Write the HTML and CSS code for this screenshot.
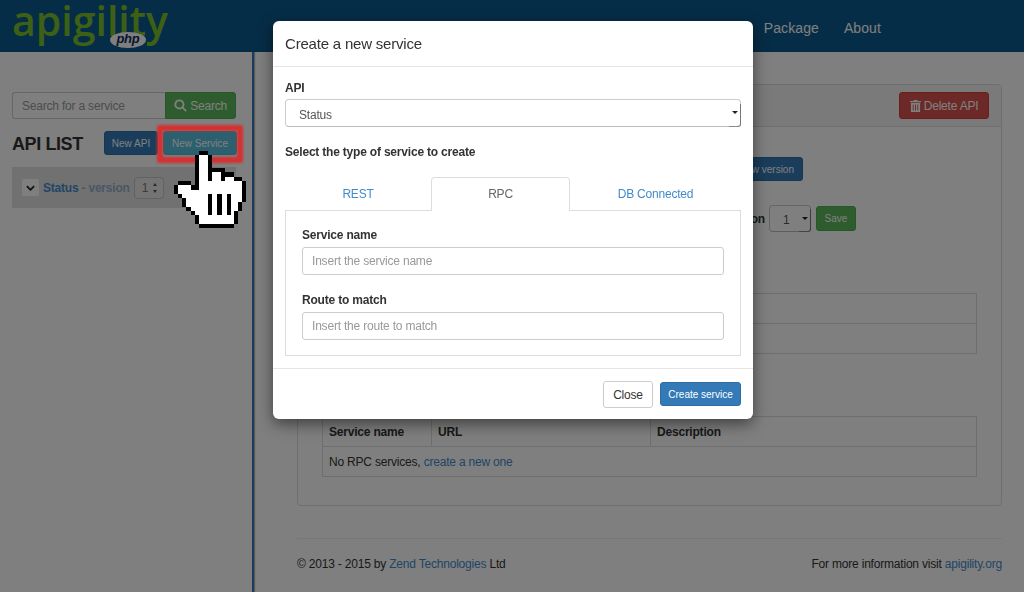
FILE: index.html
```html
<!DOCTYPE html>
<html lang="en">
<head>
    <meta charset="UTF-8">
    <meta name="viewport" content="width=device-width, initial-scale=1.0">
    <title>Apigility</title>
    <link rel="stylesheet" href="styles.css">
</head>
<body>

    <!-- Top bar -->
    <header class="topbar">
        <div class="logo">
            <span class="logo-word">apigility</span>
            <span class="logo-php">php</span>
        </div>
        <nav class="topnav">
            <a href="#">Package</a>
            <a href="#">About</a>
        </nav>
    </header>

    <div class="layout">
        <!-- API list -->
        <aside class="sidebar">
            <form class="search">
                <input class="search-input" type="text" placeholder="Search for a service">
                <button class="btn btn-green search-btn" type="button">
                    <svg class="search-icon" viewBox="0 0 12 12"><circle cx="5" cy="5" r="3.8"/><path d="M7.8 7.8 11.2 11.2"/></svg>
                    Search
                </button>
            </form>

            <div class="list-head">
                <h2>API LIST</h2>
                <div class="list-actions">
                    <button class="btn btn-blue btn-small" type="button">New API</button>
                    <button class="btn btn-cyan btn-small" type="button">New Service</button>
                </div>
            </div>

            <div class="api-row">
                <button class="chevron" type="button">
                    <svg viewBox="0 0 10 6"><path d="M1 1l4 4 4-4"/></svg>
                </button>
                <a class="api-name" href="#">Status</a>
                <span class="api-version">- version</span>
                <span class="spin">1<i class="spin-arrows"></i></span>
            </div>
        </aside>

        <!-- API detail behind the dialog -->
        <main class="content">
            <section class="panel">
                <div class="panel-head">
                    <button class="btn btn-red delete-btn" type="button">
                        <svg class="trash-icon" viewBox="0 0 12 14"><path d="M4 2V1h4v1h4v1.4H0V2zM1 4.4h10V14H1zM3 6v6.5h1V6zm2.5 0v6.5h1V6zM8 6v6.5h1V6z" fill-rule="evenodd"/></svg>
                        Delete API
                    </button>
                </div>
                <div class="panel-body">
                    <div class="version-row">
                        <button class="btn btn-blue btn-small" type="button">Create new version</button>
                    </div>
                    <div class="default-row">
                        <b>Set default version</b>
                        <span class="sel sel-small">1</span>
                        <button class="btn btn-green btn-small save-btn" type="button">Save</button>
                    </div>

                    <h4 class="section-title">REST services</h4>
                    <table class="services">
                        <tr><th>Service name</th><th>URL</th><th>Description</th></tr>
                        <tr><td colspan="3">No REST services, <a href="#">create a new one</a></td></tr>
                    </table>

                    <h4 class="section-title">RPC services</h4>
                    <table class="services">
                        <tr><th>Service name</th><th>URL</th><th>Description</th></tr>
                        <tr><td colspan="3">No RPC services, <a href="#">create a new one</a></td></tr>
                    </table>
                </div>
            </section>

            <footer class="footer">
                <span>&copy; 2013 - 2015 by <a href="#">Zend Technologies</a> Ltd</span>
                <span>For more information visit <a href="#">apigility.org</a></span>
            </footer>
        </main>
    </div>

    <div class="backdrop"></div>

    <!-- Dialog -->
    <div class="modal">
        <div class="modal-head">Create a new service</div>
        <div class="modal-body">
            <label class="field-label">API</label>
            <span class="sel sel-wide">Status</span>
            <p class="field-label type-label">Select the type of service to create</p>

            <div class="tabs">
                <a class="tab" href="#">REST</a>
                <a class="tab tab-active" href="#">RPC</a>
                <a class="tab" href="#">DB Connected</a>
            </div>
            <div class="tab-pane">
                <label class="field-label">Service name</label>
                <input class="text-input" type="text" placeholder="Insert the service name">
                <label class="field-label route-label">Route to match</label>
                <input class="text-input" type="text" placeholder="Insert the route to match">
            </div>
        </div>
        <div class="modal-foot">
            <button class="btn btn-white" type="button">Close</button>
            <button class="btn btn-primary" type="button">Create service</button>
        </div>
    </div>

    <!-- Tutorial highlight and pointer -->
    <div class="highlight"></div>
    <svg class="pointer" viewBox="0 0 17 18" shape-rendering="crispEdges">
        <path class="pointer-fill" d="M6 1.5h2M6 2.5h2M6 3.5h2M6 4.5h2M6 5.5h2M9 5.5h2M6 6.5h2M9 6.5h2M12 6.5h2M6 7.5h10M1 8.5h3M6 8.5h10M1 9.5h15M2 10.5h14M3 11.5h13M3 12.5h12M4 13.5h11M5 14.5h9M6 15.5h8M6 16.5h8"/>
        <path class="pointer-line" d="M6 .5h2M5 1.5h1M8 1.5h1M5 2.5h1M8 2.5h1M5 3.5h1M8 3.5h1M5 4.5h1M8 4.5h4M5 5.5h1M8 5.5h1M11 5.5h3M5 6.5h1M8 6.5h1M11 6.5h1M14 6.5h2M1 7.5h3M5 7.5h1M16 7.5h1M0 8.5h1M4 8.5h2M16 8.5h1M0 9.5h1M16 9.5h1M1 10.5h1M8 10.5h1M10.2 10.5h1M12.4 10.5h1M16 10.5h1M2 11.5h1M8 11.5h1M10.2 11.5h1M12.4 11.5h1M16 11.5h1M2 12.5h1M8 12.5h1M10.2 12.5h1M12.4 12.5h1M15 12.5h1M3 13.5h1M8 13.5h1M10.2 13.5h1M12.4 13.5h1M15 13.5h1M4 14.5h1M8 14.5h1M10.2 14.5h1M12.4 14.5h1M14 14.5h1M5 15.5h1M14 15.5h1M5 16.5h1M14 16.5h1M6 17.5h8"/>
    </svg>

</body>
</html>
```

FILE: styles.css
```css
* {
    box-sizing: border-box;
}

body {
    font-family: "Liberation Sans", Arial, sans-serif;
    font-size: 12px;
    letter-spacing: -0.2px;
    color: #333;
    background: #fff;
    margin: 0;
    height: 592px;
    overflow: hidden;
}

a {
    color: #428bca;
    text-decoration: none;
}

input,
button {
    letter-spacing: inherit;
}

/* Top bar */
.topbar {
    height: 52px;
    background: #0c5a8e;
    display: flex;
    align-items: center;
    justify-content: space-between;
    padding: 0 143px 0 12px;
}

.logo {
    position: relative;
    width: 146px;
    height: 52px;
}

.logo-word {
    font-family: "Open Sans", sans-serif;
    font-size: 41px;
    font-weight: 600;
    letter-spacing: 0;
    line-height: 52px;
    color: #7cc02b;
    display: block;
    margin-top: -6px;
}

.logo-php {
    position: absolute;
    left: 98px;
    top: 32px;
    width: 36px;
    height: 16px;
    border-radius: 50%;
    background: #fff;
    color: #0c2c5c;
    font-size: 13px;
    font-weight: bold;
    font-style: italic;
    line-height: 14px;
    text-align: center;
}

.topnav {
    display: flex;
    gap: 25px;
    padding-top: 4px;
}

.topnav a {
    font-size: 14px;
    letter-spacing: .1px;
    color: #fff;
}

/* Page columns */
.layout {
    display: flex;
    height: 540px;
}

.sidebar {
    width: 254px;
    padding: 40px 16px 0 12px;
    border-right: 2px solid #337ab7;
    box-shadow: 1px 0 1px rgba(0, 0, 0, .3);
    flex: none;
}

.content {
    flex: 1;
    padding: 32px 22px 0 43px;
}

/* Buttons */
.btn {
    font-family: inherit;
    font-size: 12px;
    border: 1px solid transparent;
    border-radius: 3px;
    color: #fff;
    padding: 0 8px;
}

.btn-small {
    font-size: 10px;
    letter-spacing: 0;
    height: 24px;
}

.btn-green {
    background: #5cb85c;
    border-color: #4cae4c;
}

.btn-blue {
    background: #337ab7;
    border-color: #2e6da4;
}

.btn-cyan {
    background: #5bc0de;
    border-color: #46b8da;
}

.btn-red {
    background: #d9534f;
    border-color: #d43f3a;
}

.btn-white {
    background: #fff;
    border-color: #ccc;
    color: #333;
    height: 27px;
    width: 50px;
    padding: 0;
}

.btn-primary {
    background: #337ab7;
    border-color: #2e6da4;
    font-size: 10px;
    letter-spacing: 0;
    height: 24px;
    width: 81px;
    padding: 0;
}

/* Search */
.search {
    display: flex;
    height: 27px;
}

.search-input {
    width: 153px;
    border: 1px solid #ccc;
    border-right: 0;
    border-radius: 3px 0 0 3px;
    padding: 0 9px;
    font-family: inherit;
    font-size: 12px;
}

.search-input::placeholder,
.text-input::placeholder {
    color: #999;
    opacity: 1;
}

.search-btn {
    width: 71px;
    padding: 0;
    border-radius: 0 3px 3px 0;
}

.search-icon {
    width: 13px;
    height: 13px;
    vertical-align: -2px;
    fill: none;
    stroke: #fff;
    stroke-width: 1.7;
}

/* API list */
.list-head {
    display: flex;
    align-items: center;
    justify-content: space-between;
    margin-top: 12px;
    height: 24px;
}

.list-head h2 {
    margin: 0;
    padding-top: 2px;
    font-size: 18px;
    line-height: 24px;
    letter-spacing: -.4px;
}

.list-actions {
    display: flex;
    gap: 5px;
    margin-right: -1px;
}

.list-actions .btn {
    padding: 0;
    width: 54px;
}

.list-actions .btn-cyan {
    width: 74px;
}

.api-row {
    margin-top: 12px;
    height: 41px;
    background: #e3e3e3;
    display: flex;
    align-items: center;
    padding-left: 10px;
    font-weight: bold;
}

.chevron {
    width: 17px;
    height: 17px;
    padding: 0;
    background: #fff;
    border: 0;
    border-radius: 2px;
    margin-right: 4px;
    display: flex;
    align-items: center;
    justify-content: center;
}

.chevron svg {
    width: 9px;
    height: 6px;
    fill: none;
    stroke: #222;
    stroke-width: 2;
}

.api-version {
    color: #92afc9;
    margin-left: 3px;
}

.spin {
    position: relative;
    width: 30px;
    height: 22px;
    margin-left: 4px;
    padding-left: 7px;
    border: 1px solid #c4c4c4;
    border-radius: 4px;
    background: #e8e8e8;
    font-weight: normal;
    line-height: 20px;
    color: #777;
}

/* two tiny triangles of the number spinner */
.spin-arrows::before,
.spin-arrows::after {
    content: "";
    position: absolute;
    right: 6px;
    border: 2px solid transparent;
}

.spin-arrows::before {
    top: 3px;
    border-bottom: 3px solid #555;
}

.spin-arrows::after {
    bottom: 3px;
    border-top: 3px solid #555;
}

/* Detail panel */
.panel {
    border: 1px solid #ddd;
    border-radius: 4px;
    height: 422px;
}

.panel-head {
    height: 42px;
    background: #f5f5f5;
    border-bottom: 1px solid #ddd;
    display: flex;
    align-items: center;
    justify-content: flex-end;
    padding-right: 12px;
    border-radius: 4px 4px 0 0;
}

.delete-btn {
    width: 90px;
    height: 27px;
    padding: 0;
}

.trash-icon {
    width: 11px;
    height: 13px;
    fill: #fff;
    vertical-align: -2px;
}

.panel-body {
    padding: 30px 24px 0;
}

.version-row {
    display: flex;
    justify-content: flex-end;
    padding-right: 174px;
}

.default-row {
    display: flex;
    align-items: center;
    justify-content: flex-end;
    gap: 4px;
    margin-top: 25px;
    height: 25px;
    padding-right: 121px;
}

.save-btn {
    width: 40px;
    height: 25px;
    padding: 0;
    margin-left: 1px;
}

.section-title {
    margin: 0;
    height: 62px;
    font-size: 14px;
    padding-top: 34px;
}

.services {
    width: 100%;
    table-layout: fixed;
    border-collapse: collapse;
}

.services th,
.services td {
    border: 1px solid #ddd;
    height: 30px;
    padding: 0 6px;
    text-align: left;
}

.services th:first-child {
    width: 109px;
}

.services th:nth-child(2) {
    width: 219px;
}

/* Footer */
.footer {
    margin-top: 32px;
    padding-top: 17px;
    border-top: 1px solid #eee;
    display: flex;
    justify-content: space-between;
    line-height: 16px;
}

/* Dialog */
.backdrop {
    position: fixed;
    inset: 0;
    background: rgba(0, 0, 0, .5);
}

.modal {
    position: absolute;
    left: 273px;
    top: 21px;
    width: 480px;
    height: 398px;
    background: #fff;
    border-radius: 6px;
    box-shadow: 0 5px 15px rgba(0, 0, 0, .5);
}

.modal-head {
    height: 46px;
    padding: 0 12px;
    border-bottom: 1px solid #e5e5e5;
    font-size: 15px;
    line-height: 45px;
}

.modal-body {
    padding: 14px 12px 0;
}

.field-label {
    display: block;
    margin: 0;
    font-weight: bold;
    line-height: 14px;
}

.sel {
    position: relative;
    display: block;
    border: 1px solid #ccc;
    border-bottom-color: #bbb;
    border-radius: 4px;
    color: #555;
}

/* native arrow box: dark edge on the right and in the corner */
.sel::before {
    content: "";
    position: absolute;
    right: -1px;
    bottom: -1px;
    width: 11px;
    height: 22px;
    border-right: 1px solid #777;
    border-bottom: 1px solid #888;
    border-radius: 0 0 3px 0;
}

.sel::after {
    content: "";
    position: absolute;
    right: 2px;
    top: 11px;
    border: 3px solid transparent;
    border-top: 3px solid #222;
}

.sel-wide {
    height: 28px;
    margin-top: 4px;
    padding-left: 13px;
    line-height: 31px;
}

.sel-small {
    width: 42px;
    height: 27px;
    padding-left: 13px;
    line-height: 29px;
}

.type-label {
    margin-top: 18px;
}

.tabs {
    display: grid;
    grid-template-columns: 146px 139px 171px;
    margin-top: 18px;
    height: 33px;
    position: relative;
    z-index: 1;
}

.tab {
    text-align: center;
    line-height: 34px;
    color: #428bca;
}

.tab-active {
    background: #fff;
    color: #666;
    border: 1px solid #ddd;
    border-bottom: 0;
    border-radius: 4px 4px 0 0;
    height: 34px;
    line-height: 33px;
}

.tab-pane {
    height: 146px;
    border: 1px solid #ddd;
    padding: 17px 16px 0;
}

.text-input {
    display: block;
    width: 100%;
    height: 28px;
    margin-top: 5px;
    padding: 0 9px;
    border: 1px solid #ccc;
    border-radius: 3px;
    font-family: inherit;
    font-size: 12px;
}

.route-label {
    margin-top: 18px;
}

.modal-foot {
    margin-top: 12px;
    border-top: 1px solid #e5e5e5;
    height: 51px;
    padding: 12px 12px 0;
    display: flex;
    justify-content: flex-end;
    align-items: flex-start;
    gap: 7px;
}

.modal-foot .btn-primary {
    margin-top: 1px;
}

/* Tutorial overlay */
.highlight {
    position: absolute;
    left: 157px;
    top: 125px;
    width: 86px;
    height: 38px;
    border: 6px solid #d53131;
    border-radius: 2px;
    filter: blur(1px);
}

.pointer {
    position: absolute;
    left: 173px;
    top: 151px;
    width: 74px;
    height: 77px;
    fill: none;
    stroke-width: 1;
}

.pointer-fill {
    stroke: #fff;
}

.pointer-line {
    stroke: #000;
}
```
